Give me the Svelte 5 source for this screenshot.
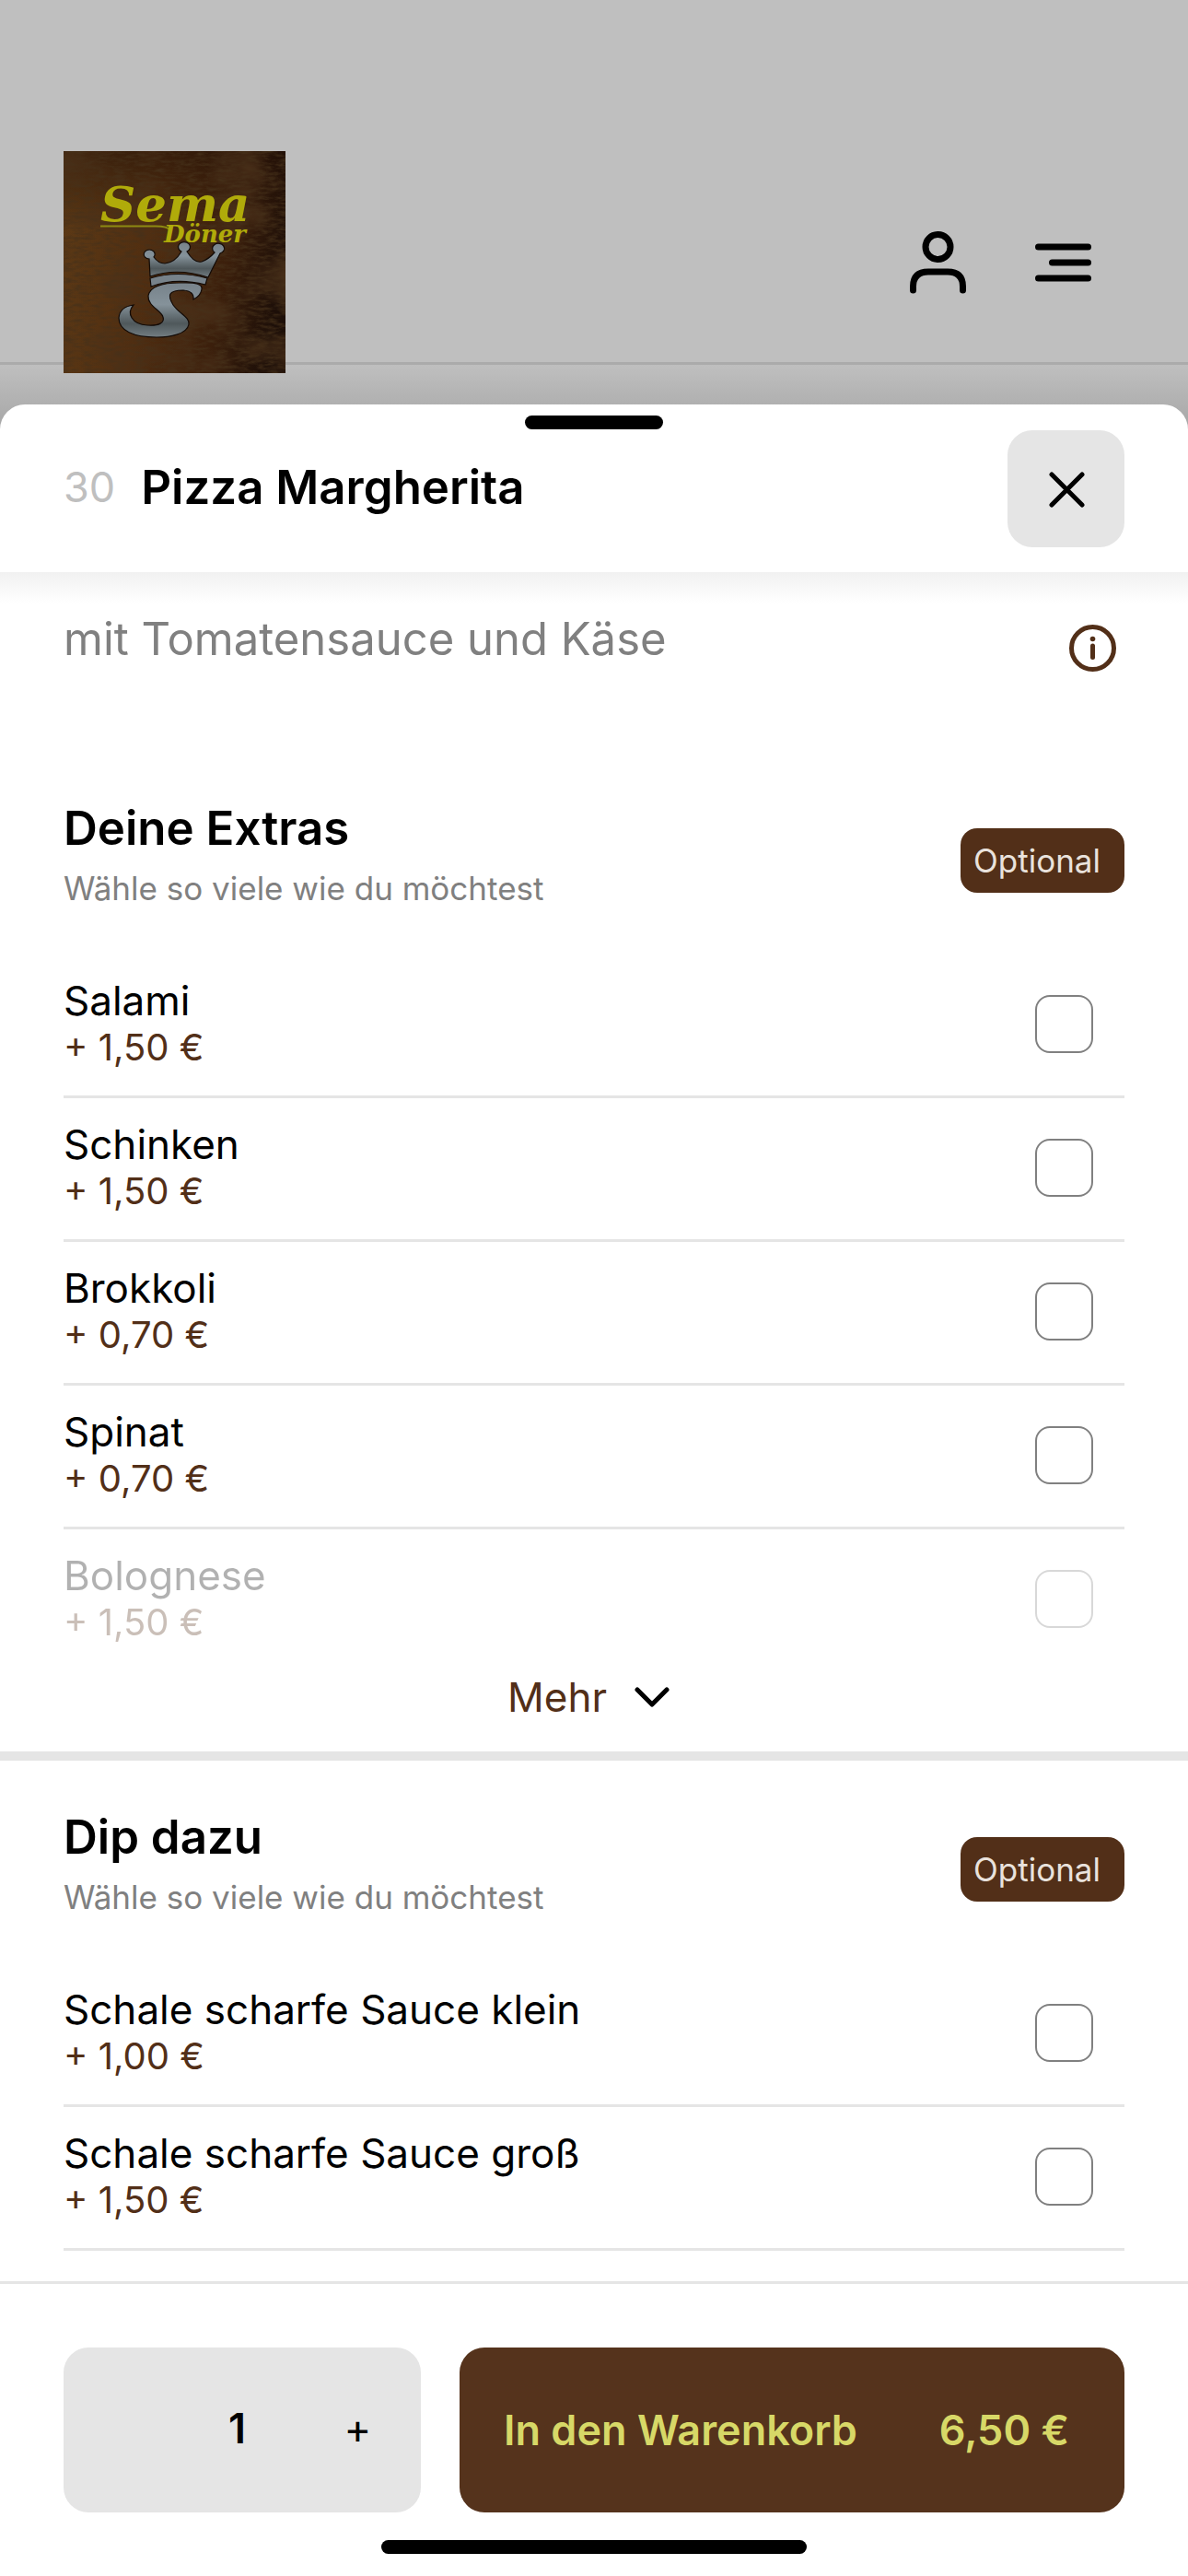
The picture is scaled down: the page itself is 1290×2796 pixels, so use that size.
<script>
  let quantity = $state(1);
  const unitPrice = 6.5;
  const euro = (value) => value.toFixed(2).replace('.', ',') + ' €';
  const groups = [
    {
      id: 'extras',
      title: 'Deine Extras',
      more: true,
      options: [
        { name: 'Salami', price: 1.5 },
        { name: 'Schinken', price: 1.5 },
        { name: 'Brokkoli', price: 0.7 },
        { name: 'Spinat', price: 0.7 },
        { name: 'Bolognese', price: 1.5, faded: true }
      ]
    },
    {
      id: 'dip',
      title: 'Dip dazu',
      more: false,
      options: [
        { name: 'Schale scharfe Sauce klein', price: 1 },
        { name: 'Schale scharfe Sauce groß', price: 1.5 }
      ]
    }
  ];
</script>

<div class="page">
  <header class="topbar">
    <a class="logo" href="#start" aria-label="Sema Döner">
      <svg viewBox="0 0 241 241" aria-hidden="true">
        <defs>
          <linearGradient id="wood" x1="0" y1="0.3" x2="1" y2="0.5">
            <stop offset="0" stop-color="#5f3b16" />
            <stop offset="0.4" stop-color="#543011" />
            <stop offset="0.75" stop-color="#3d200c" />
            <stop offset="1" stop-color="#1d0f08" />
          </linearGradient>
          <linearGradient id="shade" x1="0" y1="0" x2="0" y2="1">
            <stop offset="0" stop-color="#1a0a04" stop-opacity="0.5" />
            <stop offset="0.35" stop-color="#1a0a04" stop-opacity="0.05" />
            <stop offset="1" stop-color="#1a0a04" stop-opacity="0.05" />
          </linearGradient>
          <linearGradient id="steel" x1="0" y1="0" x2="0" y2="1">
            <stop offset="0" stop-color="#77828a" />
            <stop offset="0.4" stop-color="#85929a" />
            <stop offset="0.75" stop-color="#4f585b" />
            <stop offset="1" stop-color="#737d82" />
          </linearGradient>
          <filter id="grain" x="0" y="0" width="100%" height="100%">
            <feTurbulence type="fractalNoise" baseFrequency="0.09 0.3" numOctaves="4" seed="8" />
            <feColorMatrix values="0 0 0 0 0.06  0 0 0 0 0.03  0 0 0 0 0.01  1.8 0 0 0 -0.7" />
          </filter>
          <filter id="blotch" x="0" y="0" width="100%" height="100%">
            <feTurbulence type="fractalNoise" baseFrequency="0.018 0.025" numOctaves="3" seed="4" />
            <feColorMatrix values="0 0 0 0 0.07  0 0 0 0 0.03  0 0 0 0 0.01  2 0 0 0 -0.85" />
          </filter>
        </defs>
        <rect width="241" height="241" fill="url(#wood)" />
        <rect width="241" height="241" fill="url(#shade)" />
        <rect width="241" height="241" filter="url(#blotch)" />
        <rect width="241" height="241" filter="url(#grain)" />
        <text class="brand" x="40" y="76" font-size="53">Sema</text>
        <path d="M40 81.500H100Q113 81.500 116 86" fill="none" stroke="#8d8a12" stroke-width="2" />
        <text class="brand" x="109" y="99" font-size="26">Döner</text>
        <g stroke="#120a06" stroke-width="1.200">
          <path fill="url(#steel)" d="M94 136 93 117A6 5 0 1 1 98 115Q103 122 110 122 121 121 128 109A6.500 5.500 0 1 1 134 109Q142 122 150 120 158 117 164 110A6.500 5.500 0 1 1 170 111L157 137Q124 126 94 136Z" />
          <path fill="#77828a" d="M94 138Q124 129 156 138L154 145Q122 137 95 147Z" />
          <path fill="url(#steel)" d="M141 161Q142 152 130 151C113 151 113 157 119 167C126 177 137 180 136 188C134 199 115 202 101 202C76 202 60 195 60 181Q61 169 76 167C68 176 74 188 91 189C104 190 110 186 108 180C106 173 91 168 92 157C94 147 108 143 126 143C145 142 151 145 150 150Q149 157 141 161Z" />
        </g>
      </svg>
    </a>
    <nav class="actions" aria-label="Hauptmenü">
      <button class="plain" aria-label="Konto">
        <svg class="account" viewBox="0 0 61 68" aria-hidden="true">
          <circle cx="30.500" cy="17" r="13.500" />
          <path d="M3.500 64V60Q3.500 44 20 44H41Q57.500 44 57.500 60V64" />
        </svg>
      </button>
      <button class="plain" aria-label="Menü">
        <svg class="menu" viewBox="0 0 61 42" aria-hidden="true">
          <path d="M3.500 4H57.500M18.500 21H57.500M3.500 38H57.500" />
        </svg>
      </button>
    </nav>
  </header>
  <div class="behind"></div>

  <main class="sheet">
    <div class="sheet-head">
      <div class="grip"></div>
      <div class="head-row">
        <div class="dish">
          <span class="number">30</span>
          <h1>Pizza Margherita</h1>
        </div>
        <button class="close" aria-label="Schließen">
          <svg viewBox="0 0 40 40" aria-hidden="true"><path d="M4 4 37 37M37 4 4 37" /></svg>
        </button>
      </div>
    </div>

    <div class="about">
      <p>mit Tomatensauce und Käse</p>
      <button class="plain info" aria-label="Informationen">
        <svg viewBox="0 0 51 51" aria-hidden="true">
          <circle cx="25.500" cy="25.500" r="23" />
          <path d="M25.500 23V35.500" />
          <circle class="dot" cx="25.500" cy="15.500" r="2.800" />
        </svg>
      </button>
    </div>

    {#each groups as group (group.id)}
      <section class="group" aria-labelledby={group.id}>
        <div class="group-head">
          <div>
            <h2 id={group.id}>{group.title}</h2>
            <p>Wähle so viele wie du möchtest</p>
          </div>
          <span class="badge">Optional</span>
        </div>
        <ul>
          {#each group.options as option (option.name)}
            <li class:faded={option.faded}>
              <label>
                <span class="text">
                  <span class="name">{option.name}</span>
                  <span class="price">+ {euro(option.price)}</span>
                </span>
                <input type="checkbox" />
              </label>
            </li>
          {/each}
        </ul>
        {#if group.more}
          <button class="plain more">
            Mehr
            <svg viewBox="0 0 38 22" aria-hidden="true"><path d="M3 3 19 19 35 3" /></svg>
          </button>
        {/if}
      </section>
    {/each}

    <footer>
      <div class="order">
        <div class="quantity">
          <span></span>
          <output aria-label="Menge">{quantity}</output>
          <button class="plain" aria-label="Mehr davon" onclick={() => (quantity += 1)}>+</button>
        </div>
        <button class="cart">
          <span>In den Warenkorb</span>
          <span>{euro(unitPrice * quantity)}</span>
        </button>
      </div>
      <div class="home"></div>
    </footer>
  </main>
</div>

<style>
  :global(body) {
    margin: 0;
    background: #bfbfbf;
  }
  .page {
    display: flex;
    flex-direction: column;
    min-height: 100vh;
    color: #000;
    font-family: Inter, 'Liberation Sans', sans-serif;
  }
  .page * {
    box-sizing: border-box;
  }
  h1,
  h2,
  p,
  ul {
    margin: 0;
    padding: 0;
    list-style: none;
  }
  button {
    border: 0;
    font: inherit;
    color: inherit;
    cursor: pointer;
  }
  svg {
    display: block;
  }
  .plain {
    padding: 0;
    background: none;
  }
  .topbar {
    display: flex;
    justify-content: space-between;
    align-items: flex-start;
    padding: 164px 105px 0 69px;
    border-bottom: 3px solid #ababab;
  }
  .logo {
    position: relative;
    z-index: 1;
    margin-bottom: -12px;
  }
  .logo svg {
    width: 241px;
    height: 241px;
  }
  .brand {
    font-family: 'DejaVu Serif', serif;
    font-weight: 700;
    font-style: italic;
    fill: #b0ab0a;
  }
  .actions {
    display: flex;
    align-items: center;
    gap: 75px;
    padding-top: 87px;
  }
  .actions svg {
    fill: none;
    stroke: #000;
    stroke-width: 7;
    stroke-linecap: round;
  }
  .account {
    width: 61px;
    height: 68px;
  }
  .menu {
    width: 61px;
    height: 42px;
  }
  .behind {
    height: 70px;
    background: linear-gradient(#bfbfbf, #b0b0b0 43px, #a6a6a6);
  }
  .sheet {
    display: flex;
    flex: 1;
    flex-direction: column;
    margin-top: -27px;
    border-radius: 27px 27px 0 0;
    background: #fff;
  }
  .sheet-head {
    padding: 12px 69px 27px;
  }
  .grip {
    width: 150px;
    height: 15px;
    margin: 0 auto 1px;
    border-radius: 8px;
    background: #000;
  }
  .head-row {
    display: flex;
    justify-content: space-between;
    align-items: center;
  }
  .dish {
    display: flex;
    align-items: center;
    gap: 28px;
    padding-bottom: 4px;
  }
  .number {
    color: #bfbfbf;
    font-size: 45px;
    line-height: 62px;
  }
  h1,
  h2 {
    font-size: 51px;
    font-weight: 600;
    line-height: 62px;
  }
  .close {
    display: grid;
    place-items: center;
    width: 127px;
    height: 127px;
    padding: 0;
    border-radius: 27px;
    background: #e5e5e5;
  }
  .close svg {
    width: 40px;
    height: 40px;
    fill: none;
    stroke: #000;
    stroke-width: 5;
    stroke-linecap: round;
  }
  .about {
    display: flex;
    justify-content: space-between;
    align-items: flex-start;
    padding: 41px 78px 87px 69px;
    background: linear-gradient(#f1f1f1, #fff 34px);
  }
  .about p {
    color: #808080;
    font-size: 49px;
    line-height: 64px;
  }
  .info {
    margin-top: 16px;
  }
  .info svg {
    width: 51px;
    height: 51px;
    fill: none;
    stroke: #522f18;
    stroke-width: 5;
    stroke-linecap: round;
  }
  .info .dot {
    fill: #522f18;
    stroke: none;
  }
  .group {
    padding: 52px 69px 0;
  }
  .group + .group {
    border-top: 10px solid #e5e5e5;
  }
  .group-head {
    display: flex;
    justify-content: space-between;
    align-items: center;
    height: 132px;
    margin-bottom: 36px;
  }
  .group-head p {
    margin: 12px 0 14px;
    color: #808080;
    font-size: 35px;
    line-height: 44px;
  }
  .badge {
    padding: 13px 26px 13px 14px;
    border-radius: 18px;
    background: #522f18;
    color: #e9e2dc;
    font-size: 35px;
    line-height: 44px;
  }
  li {
    border-bottom: 3px solid #e5e5e5;
  }
  li.faded {
    border-bottom: 0;
  }
  .faded label {
    opacity: 0.3;
  }
  label {
    display: flex;
    justify-content: space-between;
    align-items: center;
    padding: 24px 34px 27px 0;
  }
  .text {
    display: flex;
    flex-direction: column;
  }
  .name {
    font-size: 44px;
    line-height: 52px;
  }
  .price {
    color: #522f18;
    font-size: 40px;
    line-height: 50px;
  }
  input {
    appearance: none;
    width: 63px;
    height: 63px;
    margin: 0;
    border: 2px solid #808080;
    border-radius: 16px;
    background: #fff;
  }
  input:checked {
    background: #522f18;
  }
  .more {
    display: flex;
    justify-content: center;
    align-items: center;
    gap: 30px;
    width: 100%;
    padding: 2px 12px 32px 0;
    color: #522f18;
    font-size: 44px;
    line-height: 54px;
  }
  .more svg {
    width: 38px;
    height: 22px;
    fill: none;
    stroke: #000;
    stroke-width: 5;
    stroke-linecap: round;
    stroke-linejoin: round;
  }
  footer {
    margin-top: auto;
    padding: 69px 69px 24px;
    border-top: 3px solid #e5e5e5;
    font-size: 45px;
  }
  .order {
    display: flex;
    gap: 42px;
    height: 179px;
  }
  .quantity {
    display: grid;
    grid-template-columns: 1fr 131px 131px;
    align-items: center;
    width: 388px;
    padding: 0 3px 4px 0;
    border-radius: 27px;
    background: #e5e5e5;
    text-align: center;
  }
  output {
    font-weight: 600;
  }
  .cart {
    display: flex;
    flex: 1;
    justify-content: space-between;
    align-items: center;
    padding: 0 60px 0 48px;
    border-radius: 27px;
    background: #55331c;
    color: #d7d867;
    font-weight: 600;
  }
  .home {
    width: 462px;
    height: 15px;
    margin: 30px auto 0;
    border-radius: 8px;
    background: #000;
  }
</style>
